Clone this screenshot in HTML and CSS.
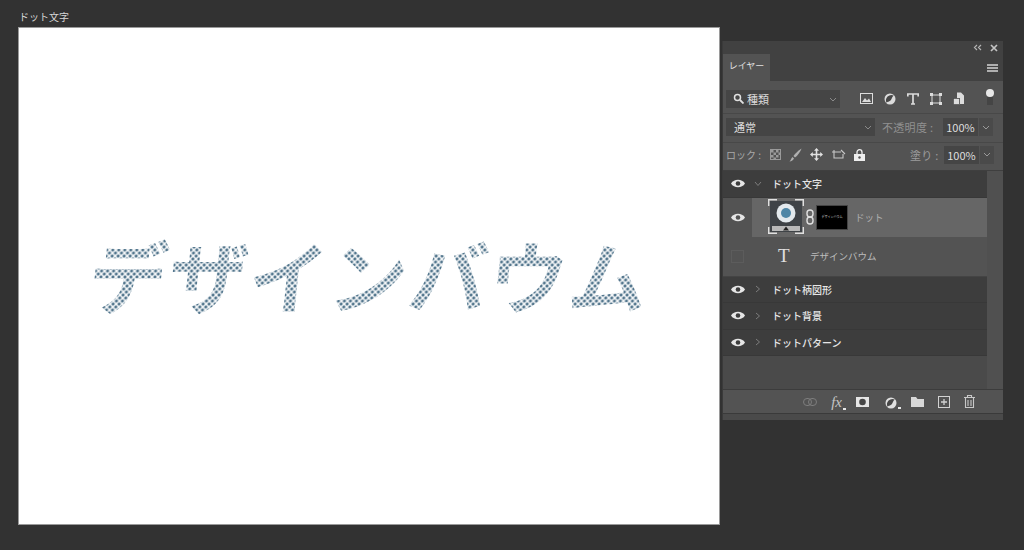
FILE: index.html
```html
<!DOCTYPE html>
<html lang="ja">
<head>
    <meta charset="UTF-8">
    <title>ドット文字</title>
    <link rel="stylesheet" href="styles.css">
</head>
<body>

<!-- Document -->
<div class="document">
    <div class="doc-title">ドット文字</div>
    <div class="doc-canvas">
        <div class="dot-text">デザインバウム</div>
    </div>
</div>

<!-- Layers panel -->
<div class="panel">
    <div class="panel-top">
        <svg class="top-icon" width="9" height="7" viewBox="0 0 9 7"><path d="M4 1 1.500 3.500 4 6M8 1 5.500 3.500 8 6" fill="none" stroke="#b4b4b4" stroke-width="1.200"/></svg>
        <svg class="top-icon" width="8" height="8" viewBox="0 0 8 8"><path d="M1 1 7 7M7 1 1 7" fill="none" stroke="#c4c4c4" stroke-width="1.700"/></svg>
    </div>
    <div class="tab-bar">
        <div class="tab">レイヤー</div>
        <svg class="panel-menu" width="11" height="8" viewBox="0 0 11 8"><path d="M0 1H11M0 4H11M0 7H11" stroke="#d4d4d4" stroke-width="1.300"/></svg>
    </div>

    <div class="options filter-row">
        <div class="select filter-select">
            <svg width="11" height="11" viewBox="0 0 11 11"><circle cx="4.500" cy="4.500" r="3" fill="none" stroke="#e0e0e0" stroke-width="1.500"/><path d="M7 7 10.500 10.500" stroke="#e0e0e0" stroke-width="1.800"/></svg>
            <span>種類</span>
            <svg class="caret" width="8" height="5" viewBox="0 0 8 5"><path d="M1 1 4 4 7 1" fill="none" stroke="#8a8a8a"/></svg>
        </div>
        <div class="filter-icons">
            <svg width="13" height="11" viewBox="0 0 13 11"><rect x=".5" y=".5" width="12" height="10" fill="none" stroke="#dcdcdc"/><path d="M2 9 5 5 7 7.500 9 5.500 11 9Z" fill="#dcdcdc"/></svg>
            <svg width="12" height="12" viewBox="0 0 12 12"><circle cx="6" cy="6" r="5.500" fill="#dcdcdc"/><path d="M2.500 9.800A5.500 5.500 0 0 1 9.800 2.500C8 3.500 8 6 6.500 7.500 5 9 3.500 8.500 2.500 9.800Z" fill="#474747"/></svg>
            <svg width="12" height="12" viewBox="0 0 12 12"><path d="M.8 3.500V1H11.200V3.500M6 1V11M4 11H8" fill="none" stroke="#dcdcdc" stroke-width="1.700"/></svg>
            <svg width="12" height="12" viewBox="0 0 12 12"><rect x="2" y="2" width="8" height="8" fill="none" stroke="#dcdcdc"/><path d="M0 0H3V3H0ZM9 0H12V3H9ZM0 9H3V12H0ZM9 9H12V12H9Z" fill="#dcdcdc"/></svg>
            <svg width="12" height="13" viewBox="0 0 12 13"><path d="M4 6V.5H8L11 3.500V12H7V6Z" fill="#dcdcdc"/><rect x=".5" y="6.500" width="6" height="6" fill="#dcdcdc" stroke="#474747" stroke-width=".6"/></svg>
        </div>
        <div class="filter-toggle"><i></i><b></b></div>
    </div>

    <div class="options blend-row">
        <div class="select blend-select">
            <span>通常</span>
            <svg class="caret" width="8" height="5" viewBox="0 0 8 5"><path d="M1 1 4 4 7 1" fill="none" stroke="#8a8a8a"/></svg>
        </div>
        <span class="opt-label">不透明度 :</span>
        <span class="value">100%</span>
        <span class="value-arrow"><svg width="8" height="5" viewBox="0 0 8 5"><path d="M1 1 4 4 7 1" fill="none" stroke="#999"/></svg></span>
    </div>

    <div class="options lock-row">
        <span class="lock-label">ロック :</span>
        <div class="lock-icons">
            <svg width="11" height="11" viewBox="0 0 11 11"><rect x=".5" y=".5" width="10" height="10" fill="none" stroke="#9a9a9a"/><path d="M1 1H3.500V3.500H1ZM6 1H8.500V3.500H6ZM3.500 3.500H6V6H3.500ZM8.500 3.500H10V6H8.500ZM1 6H3.500V8.500H1ZM6 6H8.500V8.500H6ZM3.500 8.500H6V10H3.500Z" fill="#9a9a9a"/></svg>
            <svg width="13" height="14" viewBox="0 0 13 14"><path d="M12.500 .5C10 2 6 5.500 4.500 8L6 9.500C8.500 8 11.500 3.500 12.500 .5ZM3.500 9 5 10.500C4.500 12 2.500 13.500 .5 13.500 2 12.500 2 10 3.500 9Z" fill="#b0b0b0"/></svg>
            <svg width="13" height="13" viewBox="0 0 13 13"><path d="M6.500 0 9 2.800H7.300V5.700H10.200V4L13 6.500 10.200 9V7.300H7.300V10.200H9L6.500 13 4 10.200H5.700V7.300H2.800V9L0 6.500 2.800 4V5.700H5.700V2.800H4Z" fill="#e2e2e2"/></svg>
            <svg width="15" height="12" viewBox="0 0 15 12"><path d="M3 1V9H12V5M1 3H10M10 1 14 5" fill="none" stroke="#c8c8c8" stroke-width="1.100"/></svg>
            <svg width="11" height="12" viewBox="0 0 11 12"><path d="M3 5V3.200A2.500 2.500 0 0 1 8 3.200V5" fill="none" stroke="#eee" stroke-width="1.300"/><rect y="5" width="11" height="7" fill="#eee"/><circle cx="5.500" cy="8.500" r="1.200" fill="#535353"/></svg>
        </div>
        <span class="opt-label fill-label">塗り :</span>
        <span class="value">100%</span>
        <span class="value-arrow"><svg width="8" height="5" viewBox="0 0 8 5"><path d="M1 1 4 4 7 1" fill="none" stroke="#999"/></svg></span>
    </div>

    <div class="layers-wrap">
        <div class="layers">
            <div class="layer group">
                <span class="vis"><svg class="eye" width="14" height="9" viewBox="0 0 14 9"><path d="M0 4.500C3 -.5 11 -.5 14 4.500 11 9.500 3 9.500 0 4.500Z" fill="#e6e6e6"/><circle cx="7" cy="4.500" r="2.300" fill="#3c3c3c"/></svg></span>
                <svg class="twirl" width="8" height="6" viewBox="0 0 8 6"><path d="M1 1 4 4.500 7 1" fill="none" stroke="#7d7d7d"/></svg>
                <span class="layer-name">ドット文字</span>
            </div>
            <div class="layer selected">
                <span class="vis"><svg class="eye" width="14" height="9" viewBox="0 0 14 9"><path d="M0 4.500C3 -.5 11 -.5 14 4.500 11 9.500 3 9.500 0 4.500Z" fill="#e6e6e6"/><circle cx="7" cy="4.500" r="2.300" fill="#535353"/></svg></span>
                <div class="smart-thumb">
                    <svg width="36" height="35" viewBox="0 0 36 35">
                        <rect x="2" y="2" width="32" height="31" fill="#3f4347"/>
                        <circle cx="18" cy="14" r="9.500" fill="#e3e9ed"/>
                        <circle cx="18" cy="14" r="5" fill="#4e86a6"/>
                        <rect x="4" y="27" width="28" height="5" fill="#b8b8b8"/>
                        <path d="M18 27.500 21 31.500H15Z" fill="#222"/>
                        <path d="M.7 7V.7H9M27 .7H35.300V7M.7 28V34.300H9M27 34.300H35.300V28" fill="none" stroke="#e0e0e0" stroke-width="1.400"/>
                    </svg>
                </div>
                <svg class="chain" width="8" height="16" viewBox="0 0 8 16"><rect x="1" y="1" width="6" height="7" rx="3" fill="none" stroke="#e0e0e0" stroke-width="1.400"/><rect x="1" y="8" width="6" height="7" rx="3" fill="none" stroke="#e0e0e0" stroke-width="1.400"/></svg>
                <div class="mask-thumb"><span>デザインバウム</span></div>
                <span class="layer-name thin">ドット</span>
            </div>
            <div class="layer text-layer">
                <span class="vis empty"><i></i></span>
                <span class="type-icon">T</span>
                <span class="layer-name thin">デザインバウム</span>
            </div>
            <div class="layer group">
                <span class="vis"><svg class="eye" width="14" height="9" viewBox="0 0 14 9"><path d="M0 4.500C3 -.5 11 -.5 14 4.500 11 9.500 3 9.500 0 4.500Z" fill="#e6e6e6"/><circle cx="7" cy="4.500" r="2.300" fill="#3c3c3c"/></svg></span>
                <svg class="twirl" width="6" height="8" viewBox="0 0 6 8"><path d="M1 1 4.500 4 1 7" fill="none" stroke="#7d7d7d"/></svg>
                <span class="layer-name">ドット柄図形</span>
            </div>
            <div class="layer group">
                <span class="vis"><svg class="eye" width="14" height="9" viewBox="0 0 14 9"><path d="M0 4.500C3 -.5 11 -.5 14 4.500 11 9.500 3 9.500 0 4.500Z" fill="#e6e6e6"/><circle cx="7" cy="4.500" r="2.300" fill="#3c3c3c"/></svg></span>
                <svg class="twirl" width="6" height="8" viewBox="0 0 6 8"><path d="M1 1 4.500 4 1 7" fill="none" stroke="#7d7d7d"/></svg>
                <span class="layer-name">ドット背景</span>
            </div>
            <div class="layer group">
                <span class="vis"><svg class="eye" width="14" height="9" viewBox="0 0 14 9"><path d="M0 4.500C3 -.5 11 -.5 14 4.500 11 9.500 3 9.500 0 4.500Z" fill="#e6e6e6"/><circle cx="7" cy="4.500" r="2.300" fill="#3c3c3c"/></svg></span>
                <svg class="twirl" width="6" height="8" viewBox="0 0 6 8"><path d="M1 1 4.500 4 1 7" fill="none" stroke="#7d7d7d"/></svg>
                <span class="layer-name">ドットパターン</span>
            </div>
        </div>
        <div class="layers-scroll"></div>
    </div>

    <div class="panel-foot">
        <svg width="14" height="8" viewBox="0 0 14 8"><rect x=".5" y=".5" width="8" height="7" rx="3.500" fill="none" stroke="#7e7e7e"/><rect x="5.500" y=".5" width="8" height="7" rx="3.500" fill="none" stroke="#7e7e7e"/></svg>
        <span class="fx">fx<i></i></span>
        <svg width="13" height="10" viewBox="0 0 13 10"><rect width="13" height="10" fill="#e6e6e6"/><circle cx="6.500" cy="5" r="3.300" fill="#474747"/></svg>
        <span class="adjust"><svg width="12" height="12" viewBox="0 0 12 12"><circle cx="6" cy="6" r="5.500" fill="#e0e0e0"/><path d="M2.500 9.800A5.500 5.500 0 0 1 9.800 2.500C8 3.500 8 6 6.500 7.500 5 9 3.500 8.500 2.500 9.800Z" fill="#474747"/></svg><i></i></span>
        <svg width="13" height="10" viewBox="0 0 13 10"><path d="M0 0H5L6.500 2H13V10H0Z" fill="#d8d8d8"/></svg>
        <svg width="12" height="12" viewBox="0 0 12 12"><rect x=".5" y=".5" width="11" height="11" fill="none" stroke="#d2d2d2"/><path d="M6 3V9M3 6H9" stroke="#d2d2d2" stroke-width="1.300"/></svg>
        <svg width="11" height="13" viewBox="0 0 11 13"><path d="M0 2.500H11M3.500 2.500V.5H7.500V2.500M1.500 3V12.500H9.500V3M4 5V11M7 5V11" fill="none" stroke="#c8c8c8" stroke-width="1.100"/></svg>
    </div>
    <div class="panel-grip"></div>
</div>

</body>
</html>
```

FILE: styles.css
```css
html, body {
    margin: 0;
    padding: 0;
    height: 100%;
    overflow: hidden;
}

body {
    display: flex;
    align-items: flex-start;
    background-color: #323232;
    color: #d8d8d8;
    font-family: "Noto Sans CJK JP", "Noto Sans", sans-serif;
}

/* Document */
.document {
    margin-left: 18px;
    width: 702px;
}

.doc-title {
    height: 27px;
    padding: 8px 0 0 1px;
    box-sizing: border-box;
    font-size: 10px;
    line-height: 18px;
    color: #d6d6d6;
}

.doc-canvas {
    height: 498px;
    box-sizing: border-box;
    background-color: #fff;
    border: 1px solid #9a9a9a;
    display: flex;
    align-items: center;
    justify-content: center;
}

/* Dot pattern through the letters */
.dot-text {
    padding-bottom: 5px;
    font-size: 79px;
    font-weight: 700;
    line-height: 90px;
    letter-spacing: 1px;
    white-space: nowrap;
    background-color: #f6f8f9;
    background-image:
        radial-gradient(circle, #54778e 1.100px, rgba(84, 119, 142, 0) 2px),
        radial-gradient(circle, #54778e 1.100px, rgba(84, 119, 142, 0) 2px);
    background-size: 6px 6px;
    background-position: 0 0, 3px 3px;
    -webkit-background-clip: text;
    background-clip: text;
    color: transparent;
    transform: skewX(-6deg);
}

/* Layers panel */
.panel {
    margin: 41px 0 0 2px;
    width: 281px;
    height: 379px;
    box-sizing: border-box;
    display: flex;
    flex-direction: column;
    background-color: #4a4a4a;
    border-left: 1px solid #3a3a3a;
    font-size: 11px;
}

.panel-top {
    height: 13px;
    flex: none;
    display: flex;
    justify-content: flex-end;
    align-items: center;
    gap: 8px;
    padding-right: 5px;
    background-color: #414141;
}

.tab-bar {
    height: 27px;
    flex: none;
    display: flex;
    justify-content: space-between;
    align-items: center;
    padding-right: 5px;
    background-color: #414141;
}

.tab {
    align-self: stretch;
    width: 47px;
    box-sizing: border-box;
    padding-bottom: 5px;
    display: flex;
    align-items: center;
    justify-content: center;
    background-color: #535353;
    color: #e2e2e2;
    font-size: 9px;
}

.options {
    display: flex;
    align-items: center;
    flex: none;
    box-sizing: border-box;
    background-color: #535353;
    padding-left: 3px;
    border-bottom: 1px solid #484848;
}

.filter-row {
    height: 33px;
    padding-top: 3px;
}

.blend-row {
    height: 29px;
    padding-bottom: 2px;
}

.lock-row {
    height: 28px;
    padding-bottom: 4px;
    border-bottom: 1px solid #3f3f3f;
}

.select {
    height: 18px;
    display: flex;
    align-items: center;
    box-sizing: border-box;
    background-color: #454545;
    color: #dcdcdc;
    position: relative;
}

.filter-select {
    width: 114px;
    padding-left: 7px;
    gap: 3px;
}

.blend-select {
    width: 149px;
    padding-left: 8px;
}

.caret {
    position: absolute;
    right: 3px;
    top: 7px;
}

.filter-icons {
    display: flex;
    align-items: center;
    gap: 11px;
    margin-left: 20px;
}

.filter-toggle {
    margin: -3px 0 0 21px;
    display: flex;
    flex-direction: column;
}

.filter-toggle i {
    width: 8px;
    height: 8px;
    border-radius: 50%;
    background-color: #e8e8e8;
}

.filter-toggle b {
    width: 6px;
    height: 8px;
    margin-left: 1px;
    background-color: #454545;
}

.opt-label {
    margin-left: 7px;
    color: #909090;
    white-space: nowrap;
    width: 61px;
    letter-spacing: .3px;
}

.fill-label {
    margin-left: 31px;
    width: 34px;
    color: #9c9c9c;
}

.value {
    width: 35px;
    height: 18px;
    line-height: 18px;
    text-align: center;
    background-color: #454545;
    color: #dedede;
    font-size: 11px;
}

.value-arrow {
    width: 14px;
    height: 18px;
    margin-left: 1px;
    display: flex;
    align-items: center;
    justify-content: center;
    background-color: #4a4a4a;
}

.lock-label {
    color: #a8a8a8;
    width: 41px;
    white-space: nowrap;
    font-size: 10px;
}

.lock-icons {
    display: flex;
    align-items: center;
    gap: 8px;
    width: 109px;
    margin-left: 3px;
}

/* Layer list */
.layers-wrap {
    height: 219px;
    flex: none;
    display: flex;
    background-color: #4a4a4a;
    border-bottom: 1px solid #3c3c3c;
    box-sizing: border-box;
}

.layers {
    width: 264px;
    flex: none;
}

.layers-scroll {
    flex: 1;
    background-color: #505050;
}

.layer {
    display: flex;
    align-items: center;
    box-sizing: border-box;
    border-bottom: 1px solid #383838;
}

.vis {
    width: 29px;
    align-self: stretch;
    flex: none;
    display: flex;
    align-items: center;
    justify-content: center;
    box-sizing: border-box;
}

.group {
    height: 26.500px;
    background-color: #3d3d3d;
}

.group .layer-name {
    color: #e6e6e6;
    font-weight: 500;
    font-size: 10px;
    margin-left: 1px;
}

.twirl {
    margin: 0 9px 0 2px;
    width: 8px;
}

.selected {
    height: 39px;
    background-color: #666;
    border-bottom: 0;
}

.selected .vis {
    background-color: #535353;
}

.smart-thumb {
    margin-left: 16px;
    width: 36px;
    height: 35px;
    margin-top: -2px;
}

.chain {
    margin: 0 1px 0 2px;
}

.mask-thumb {
    width: 30px;
    height: 23px;
    margin-left: 2px;
    background-color: #000;
    outline: 1px solid #444;
    display: flex;
    align-items: center;
    justify-content: center;
    overflow: hidden;
}

.mask-thumb span {
    font-size: 3px;
    color: #ddd;
    white-space: nowrap;
}

.thin {
    font-size: 9.500px;
    color: #bdbdbd;
}

.selected .thin {
    margin-left: 8px;
    color: #aeaeae;
}

.text-layer {
    height: 40px;
    background-color: #535353;
    border-bottom: 1px solid #444;
}

.vis.empty i {
    width: 11px;
    height: 11px;
    border: 1px solid #5c5c5c;
}

.type-icon {
    margin-left: 26px;
    width: 32px;
    font-family: "Liberation Serif", serif;
    font-size: 19px;
    line-height: 20px;
    color: #e0e0e0;
}

/* Footer */
.panel-foot {
    height: 23px;
    flex: none;
    display: flex;
    align-items: center;
    justify-content: flex-end;
    gap: 14px;
    padding-right: 28px;
    background-color: #535353;
    box-sizing: border-box;
}

.fx {
    font-family: "Liberation Serif", serif;
    font-style: italic;
    font-size: 15px;
    line-height: 14px;
    color: #c4c4c4;
    position: relative;
}

.adjust {
    position: relative;
    height: 12px;
    margin-left: 2px;
}

.fx i, .adjust i {
    position: absolute;
    right: -4px;
    bottom: -1px;
    width: 3px;
    height: 2px;
    background-color: #e8e8e8;
}

.panel-grip {
    flex: 1;
    background-color: #4a4a4a;
    border-top: 1px solid #3a3a3a;
}
```
